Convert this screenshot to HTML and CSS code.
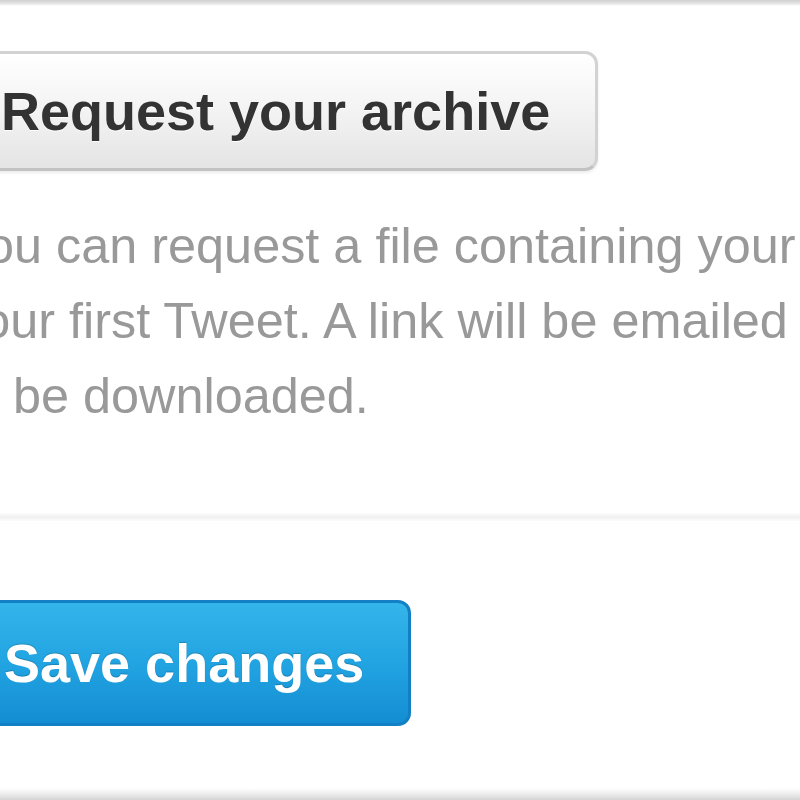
FILE: index.html
```html
<!DOCTYPE html>
<html>
<head>
<meta charset="utf-8">
<link rel="stylesheet" href="styles.css">
</head>
<body>
<div class="page">
  <div class="top-rule"></div>
  <div class="content">
    <section class="archive">
      <button class="btn btn-default">Request your archive</button>
      <p class="desc">You can request a file containing your information, starting with<br>your first Tweet. A link will be emailed to you when the file is ready<br>to be downloaded.</p>
    </section>
    <hr class="sep">
    <div class="actions">
      <button class="btn btn-primary">Save changes</button>
    </div>
  </div>
  <div class="bottom-rule"></div>
</div>
</body>
</html>
```
FILE: styles.css
```css
html, body {
  margin: 0;
  padding: 0;
  background: #fff;
  overflow: hidden;
}
.page {
  width: 800px;
  height: 800px;
  display: flex;
  flex-direction: column;
  overflow: hidden;
  font-family: "Liberation Sans", Arial, sans-serif;
}
.top-rule {
  height: 6px;
  flex: none;
  background: linear-gradient(#cfcfcf, #e6e6e6 60%, #fff);
}
.content {
  flex: 1;
  margin-left: -43px;
  display: flex;
  flex-direction: column;
  white-space: nowrap;
}
.archive {
  padding-top: 45px;
}
.btn {
  display: inline-block;
  font-family: "Liberation Sans", Arial, sans-serif;
  font-weight: bold;
  font-size: 54px;
  line-height: 62px;
  border-radius: 13px;
  padding: 26px 46px;
  margin: 0;
  cursor: pointer;
}
.btn-default {
  margin-left: -5px;
  padding-right: 45px;
  color: #333;
  background: linear-gradient(#ffffff, #f3f3f3 50%, #e4e4e4);
  border: 3px solid #d2d2d2;
  border-bottom-color: #c2c2c2;
  box-shadow: 0 2px 3px rgba(0,0,0,0.08);
  text-shadow: 0 1px 0 #fff;
}
.desc {
  margin: 37px 0 0;
  font-size: 50.4px;
  line-height: 75px;
  color: #999;
}
.sep {
  margin: 80px 0 0 43px;
  border: 0;
  height: 8px;
  width: 800px;
  background: linear-gradient(#fdfdfd, #f0f0f0 50%, #fcfcfc);
}
.actions {
  padding-top: 79px;
}
.btn-primary {
  margin-left: -2px;
  color: #fff;
  background: linear-gradient(#33b4ea, #22a4e2 50%, #148dd3);
  border: 3px solid #137fc4;
  padding: 29px 44px 29px 46px;
  text-shadow: 0 -1px 1px rgba(0,0,0,0.2);
}
.bottom-rule {
  height: 12px;
  flex: none;
  background: linear-gradient(#fff, #ececec 50%, #d4d4d4);
}
```
